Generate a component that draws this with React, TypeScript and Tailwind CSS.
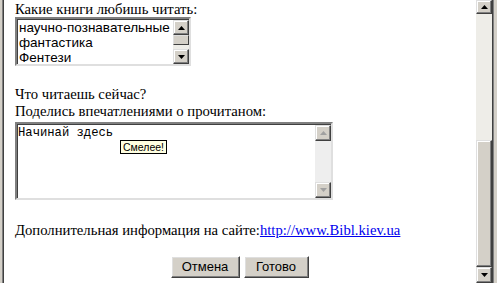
import React from "react";

const serif = "font-['Liberation_Serif',serif] text-[14.7px] leading-[16px] text-black";
const sans = "font-['Liberation_Sans',Arial,sans-serif]";

function Arrow({ up, gray }: { up?: boolean; gray?: boolean }) {
  return (
    <svg width="7" height="4" viewBox="0 0 7 4">
      <polygon
        points={up ? "3.5,0 7,4 0,4" : "0,0 7,0 3.5,4"}
        fill={gray ? "#a0a0a0" : "#000"}
      />
    </svg>
  );
}

function ScrollBtn({ up, gray, h = 15 }: { up?: boolean; gray?: boolean; h?: number }) {
  return (
    <div
      className="flex shrink-0 items-center justify-center border border-t-[#dfdfdf] border-l-[#dfdfdf] border-r-[#404040] border-b-[#404040] bg-[#d4d0c8] shadow-[inset_-1px_-1px_#808080,inset_1px_1px_#fff]"
      style={{ height: h }}
    >
      <Arrow up={up} gray={gray} />
    </div>
  );
}

function Button({ label, w }: { label: string; w: string }) {
  return (
    <div
      className={`${w} ${sans} flex h-[22px] items-center justify-center border border-t-white border-l-white border-r-[#404040] border-b-[#404040] bg-[#d4d0c8] text-[13px] text-black shadow-[inset_-1px_-1px_#808080,inset_1px_1px_#dfdfdf]`}
    >
      {label}
    </div>
  );
}

export default function App() {
  return (
    <div className="flex h-[283px] w-[497px] overflow-hidden bg-white">
      {/* left frame */}
      <div className="flex w-[4px] shrink-0">
        <div className="w-[2px] bg-[#d4d0c8]" />
        <div className="w-px bg-[#808080]" />
        <div className="w-px bg-[#404040]" />
      </div>

      {/* page */}
      <div className="flex flex-1 flex-col pl-[11px]">
        <div className={`${serif} pt-px`}>Какие книги любишь читать:</div>

        {/* listbox */}
        <div className="flex h-[49px] w-[176px] border-2 border-t-[#808080] border-l-[#808080] border-r-[#dfdfdf] border-b-[#dfdfdf] bg-white shadow-[inset_1px_1px_#404040]">
          <div className={`${sans} flex-1 pl-[2px] pt-px text-[13.5px] leading-[15px] text-black`}>
            <div>научно-познавательные</div>
            <div>фантастика</div>
            <div>Фентези</div>
          </div>
          <div className="flex w-[16px] flex-col pt-px">
            <ScrollBtn up />
            <div className="h-[10px] border border-t-[#dfdfdf] border-l-[#dfdfdf] border-r-[#404040] border-b-[#404040] bg-[#d4d0c8]" />
            <div className="flex-1 bg-[#eeede8]" />
            <ScrollBtn />
          </div>
        </div>

        <div className={`${serif} mt-[20px]`}>Что читаешь сейчас?</div>
        <div className={`${serif} mt-px`}>Поделись впечатлениями о прочитаном:</div>

        {/* textarea */}
        <div className="relative mt-[3px] flex h-[78px] w-[318px] border-2 border-t-[#808080] border-l-[#808080] border-r-[#dfdfdf] border-b-[#dfdfdf] bg-white shadow-[inset_1px_1px_#404040]">
          <div className="flex-1 pl-[1px] pt-[2px] font-['Liberation_Mono',monospace] text-[12.2px] leading-[14px] text-black">
            Начинай здесь
          </div>
          <div className="flex w-[16px] flex-col pt-px">
            <ScrollBtn up gray h={16} />
            <div className="flex-1 bg-[#eeeeee]" />
            <ScrollBtn gray h={16} />
          </div>
          {/* tooltip */}
          <div
            className={`${sans} absolute left-[103px] top-[16px] h-[14px] border border-black bg-[#ffffe1] px-[2px] text-[10.5px] leading-[12px] text-black`}
          >
            Смелее!
          </div>
        </div>

        <div className={`${serif} mt-[22px]`}>
          Дополнительная информация на сайте:
          <span className="text-[#0000ee] underline">http://www.Bibl.kiev.ua</span>
        </div>

        <div className="mt-[18px] flex justify-center gap-[4px] pr-[12px]">
          <Button label="Отмена" w="w-[69px]" />
          <Button label="Готово" w="w-[65px]" />
        </div>
      </div>

      {/* window scrollbar */}
      <div className="flex w-[16px] shrink-0 flex-col">
        <ScrollBtn up h={14} />
        <div className="h-[131px] bg-[#eeede8]" />
        <div className="h-[131px] border border-t-[#dfdfdf] border-l-[#dfdfdf] border-r-[#404040] border-b-[#404040] bg-[#d4d0c8] shadow-[inset_-1px_-1px_#808080,inset_1px_1px_#fff]" />
        <ScrollBtn h={16} />
      </div>

      {/* right frame */}
      <div className="flex w-[5px] shrink-0">
        <div className="w-px bg-[#404040]" />
        <div className="w-px bg-[#808080]" />
        <div className="w-[3px] bg-[#d4d0c8]" />
      </div>
    </div>
  );
}
